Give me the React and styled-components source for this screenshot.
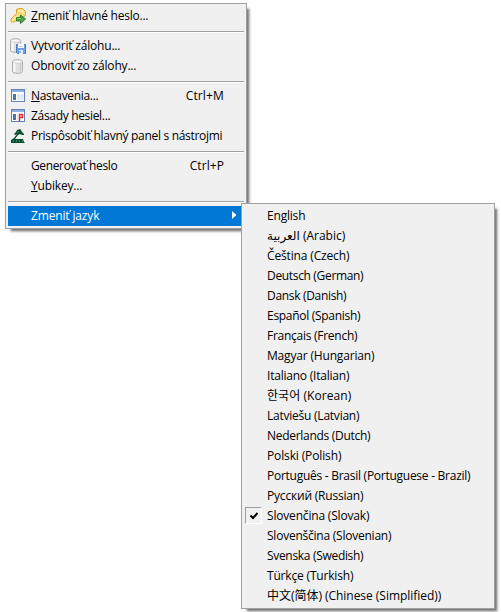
import React, { useLayoutEffect, useRef } from "react";
import styled, { createGlobalStyle, css } from "styled-components";

const GlobalStyle = createGlobalStyle`
  * { box-sizing: border-box; }
  body { margin: 0; background: #fff; overflow: hidden; }
`;

const Desktop = styled.main`
  position: relative;
  width: 501px;
  height: 612px;
  background: #fff;
  color: #000;
  font: 12px/20px "Open Sans", "Noto Sans", "DejaVu Sans", "Noto Sans CJK SC", "Noto Sans CJK KR", sans-serif;
`;

const Menu = styled.ul`
  position: absolute;
  display: flex;
  flex-direction: column;
  margin: 0;
  padding: 2px;
  list-style: none;
  background: #f0f0f0;
  border: 1px solid #a0a0a0;
  box-shadow: 4px 4px 2px -2px rgba(0, 0, 0, 0.45), 4px 4px 3px -1px rgba(0, 0, 0, 0.15);
`;

const ToolsMenu = styled(Menu)`
  left: 5px;
  top: 3px;
  width: 242px;
`;

const LanguageMenu = styled(Menu)`
  left: 241px;
  top: 203px;
  width: 254px;
`;

const Item = styled.li`
  display: grid;
  grid-template-columns: 23px 1fr auto;
  align-items: center;
  height: 20px;
  padding-right: 20px;
  white-space: pre;
  ${({ $active }) =>
    $active &&
    css`
      background: #0078d7;
      color: #fff;
      padding-right: 7px;
    `}
`;

const Separator = styled.li`
  height: 10px;
  padding-top: 5px;

  &::before {
    content: "";
    display: block;
    height: 1px;
    background: #a0a0a0;
    border-bottom: 1px solid #fff;
  }
`;

const IconSlot = styled.span`
  display: flex;
  height: 20px;
  padding: 2px 0 0 2px;

  svg { display: block; flex: none; }
`;

const Label = styled.span`
  justify-self: start;
  display: inline-block;
  height: 20px;
`;

const Mnemonic = styled.span`
  text-decoration: underline;
  text-decoration-thickness: 1px;
  text-underline-offset: 1px;
`;

const LanguageItem = styled.li`
  display: flex;
  align-items: center;
  height: 20px;
  white-space: pre;
`;

const CheckSlot = styled.span`
  width: 23px;
  flex: none;
  display: flex;
  padding-left: 1px;
`;

const CheckBox = styled.span`
  display: flex;
  align-items: center;
  justify-content: center;
  width: 17px;
  height: 17px;
  margin-top: -1px;
  background: #f0f0f0;
  border: 1px solid;
  border-color: #a0a0a0 #fff #fff #a0a0a0;
`;

// Tracks a label so that it occupies the given advance width.
function FittedText({ width, children }) {
  const ref = useRef(null);
  useLayoutEffect(() => {
    const el = ref.current;
    el.style.letterSpacing = "0px";
    const natural = el.getBoundingClientRect().width;
    const count = Array.from(el.textContent).length;
    el.style.letterSpacing = `${(width - 0.7 - natural) / count}px`;
  }, [width]);
  return <Label ref={ref}>{children}</Label>;
}

const KeyIcon = () => (
  <svg width="17" height="17" viewBox="0 0 17 17">
    <path d="M6.500 1.500l2-1h4l3 3v3.500l-2 2h-4l-5 5h-3.500v-3l5.500-5.500z" fill="#fbd873" stroke="#e0a234" />
    <path d="M8 3h4l2 2" fill="none" stroke="#fff3bd" strokeWidth="1.500" />
    <path d="M2 13l6-6" stroke="#fff0a6" strokeWidth="1.500" />
    <path d="M6.500 9.500h4v-2.500l5 4-5 4.500v-2.500h-4z" fill="#4fa33d" stroke="#2c7b2c" />
    <path d="M7 10.500h4" stroke="#91cf70" />
  </svg>
);

const Cylinder = () => (
  <>
    <path d="M2.500 2.500c0-2.500 10-2.500 10 0v10c0 2.500-10 2.500-10 0z" fill="#e0e0e0" stroke="#b0b0b0" />
    <path d="M4.500 4v9" stroke="#fafafa" strokeWidth="2" />
    <path d="M10.500 4v8.500" stroke="#cacaca" />
    <ellipse cx="7.500" cy="2.700" rx="4.500" ry="1.600" fill="#fafafa" stroke="#c4c4c4" strokeWidth=".7" />
  </>
);

const DatabaseIcon = () => (
  <svg width="17" height="17" viewBox="0 0 17 17">
    <g transform="translate(0 1)"><Cylinder /></g>
  </svg>
);

const BackupIcon = () => (
  <svg width="17" height="17" viewBox="0 0 17 17">
    <g transform="translate(-2 0)"><Cylinder /></g>
    <path d="M6.500 6.500h9v9h-8l-1-1z" fill="#6b9fe8" stroke="#4a78c4" />
    <path d="M8 6h6v4H8z" fill="#fff" />
    <path d="M9 8.500h4" stroke="#c3d4eb" />
    <path d="M9 12h4v4H9z" fill="#e6eefa" />
    <path d="M10 13v2" stroke="#4a78c4" />
  </svg>
);

const PanelIcon = ({ policy }) => (
  <svg width="17" height="17" viewBox="0 0 17 17">
    <rect x="1.500" y="1.500" width="13" height="12" fill="#fff" stroke="#5f83bd" />
    <path d="M2 3h12" stroke="#8db0e3" strokeWidth="2" />
    <rect x="3" y="6" width="3" height="6" fill="#4a74b4" />
    <path d="M7 6h3v6H7zM10.500 6h3v6h-3z" fill="#dce7f6" />
    {policy && (
      <>
        <path d="M8 5h6v8H8z" fill="#fff" />
        <path d="M9.500 13V6.500h3v3h-3" fill="none" stroke="#e32636" strokeWidth="1.500" />
      </>
    )}
  </svg>
);

const CustomizeIcon = () => (
  <svg width="17" height="17" viewBox="0 0 17 17">
    <path d="M4 6l2-2 1-2 3-1 1 1 1 2 2 2v1h-2l-2-1-2 1-3 4h8l1 3 1 1H1v-3l3-2 3-4-2 1z" fill="#064f32" />
    <path d="M3 13h1m2 0h1m2 0h1m2 0h1" stroke="#78ae90" />
    <path d="M7 5l2-2" stroke="#3b8762" />
  </svg>
);

const SubmenuArrow = () => (
  <svg width="5" height="8" viewBox="0 0 5 8"><path d="M0 0l4.500 4L0 8z" fill="#fff" /></svg>
);

const Check = () => (
  <svg width="8" height="8" viewBox="0 0 8 8">
    <path d="M.5 3.500L3 6 7.500 1" fill="none" stroke="#000" strokeWidth="2" />
  </svg>
);

const ArrowItem = styled(Item)`
  svg { margin-top: -2px; }
`;

const tools = [
  { key: "Z", text: "meniť hlavné heslo...", width: 118, icon: <KeyIcon /> },
  null,
  { text: "Vytvoriť zálohu...", width: 90, icon: <BackupIcon /> },
  { text: "Obnoviť zo zálohy...", width: 106, icon: <DatabaseIcon /> },
  null,
  { key: "N", text: "astavenia...", width: 68, icon: <PanelIcon />, shortcut: "Ctrl+M", shortcutWidth: 39 },
  { text: "Zásady hesiel...", width: 80, icon: <PanelIcon policy /> },
  { text: "Prispôsobiť hlavný panel s nástrojmi", width: 192, icon: <CustomizeIcon /> },
  null,
  { text: "Generovať heslo", width: 87, shortcut: "Ctrl+P", shortcutWidth: 35 },
  { key: "Y", text: "ubikey...", width: 52 },
  null,
];

const languages = [
  ["English", 39],
  ["العربية (Arabic)", 79],
  ["Čeština (Czech)", 83],
  ["Deutsch (German)", 97],
  ["Dansk (Danish)", 80],
  ["Español (Spanish)", 94],
  ["Français (French)", 91],
  ["Magyar (Hungarian)", 108],
  ["Italiano (Italian)", 83],
  ["한국어 (Korean)", 85],
  ["Latviešu (Latvian)", 93],
  ["Nederlands (Dutch)", 104],
  ["Polski (Polish)", 75],
  ["Português - Brasil (Portuguese - Brazil)", 204],
  ["Русский (Russian)", 97],
  ["Slovenčina (Slovak)", 103, true],
  ["Slovenščina (Slovenian)", 125],
  ["Svenska (Swedish)", 97],
  ["Türkçe (Turkish)", 87],
  ["中文(简体) (Chinese (Simplified))", 175],
];

export default function App() {
  return (
    <Desktop>
      <GlobalStyle />
      <ToolsMenu>
        {tools.map((tool, i) =>
          tool ? (
            <Item key={i}>
              <IconSlot>{tool.icon}</IconSlot>
              <FittedText width={tool.width}>
                {tool.key && <Mnemonic>{tool.key}</Mnemonic>}
                {tool.text}
              </FittedText>
              {tool.shortcut && <FittedText width={tool.shortcutWidth}>{tool.shortcut}</FittedText>}
            </Item>
          ) : (
            <Separator key={i} />
          )
        )}
        <ArrowItem $active>
          <span />
          <FittedText width={69}>Zmeniť jazyk</FittedText>
          <SubmenuArrow />
        </ArrowItem>
      </ToolsMenu>
      <LanguageMenu>
        {languages.map(([name, width, checked]) => (
          <LanguageItem key={name}>
            <CheckSlot>{checked && <CheckBox><Check /></CheckBox>}</CheckSlot>
            <FittedText width={width}>{name}</FittedText>
          </LanguageItem>
        ))}
      </LanguageMenu>
    </Desktop>
  );
}
